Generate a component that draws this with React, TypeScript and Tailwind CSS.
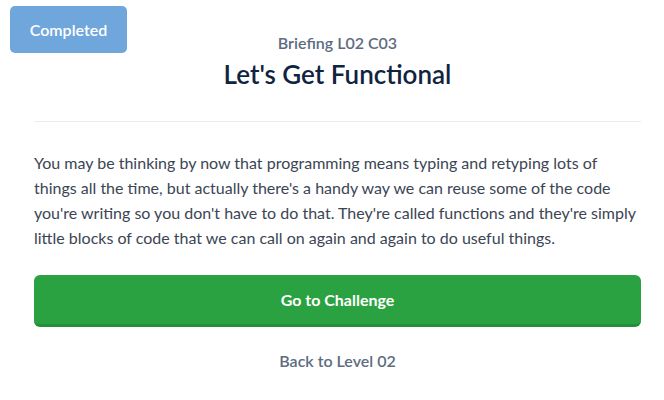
import React from "react";

export default function App() {
    return (
        <div className="relative w-[664px] h-[400px] bg-white font-['Lato','Open_Sans',sans-serif]">
            {/* completed badge */}
            <div className="absolute left-[10px] top-[6px] w-[117px] h-[47px] rounded-[5px] bg-[#6fa6dc] flex items-center justify-center text-white text-[16px] font-semibold">
                Completed
            </div>

            <div className="px-[34px] pt-[33px] pr-[23px]">
                <div className="text-center">
                    <p className="text-[16px] leading-[19px] font-semibold text-[#5d6c80]">
                        Briefing L02 C03
                    </p>
                    <h1 className="mt-[6px] text-[26px] leading-[32px] font-semibold text-[#10243f]">
                        Let's Get Functional
                    </h1>
                </div>

                <hr className="mt-[31px] border-0 h-px bg-[#e8edf2]" />

                <p className="mt-[28px] text-[16px] leading-[25px] whitespace-nowrap text-[#3b4554]">
                    You may be thinking by now that programming means typing and retyping lots of<br />
                    things all the time, but actually there's a handy way we can reuse some of the code<br />
                    you're writing so you don't have to do that. They're called functions and they're simply<br />
                    little blocks of code that we can call on again and again to do useful things.
                </p>

                <button className="mt-[25px] w-full h-[52px] rounded-[6px] bg-[#2aa241] border-b-[3px] border-[#23903a] text-white text-[16px] font-bold">
                    Go to Challenge
                </button>

                <p className="mt-[22px] text-center text-[16px] font-semibold text-[#5d6c80]">
                    Back to Level 02
                </p>
            </div>
        </div>
    );
}
